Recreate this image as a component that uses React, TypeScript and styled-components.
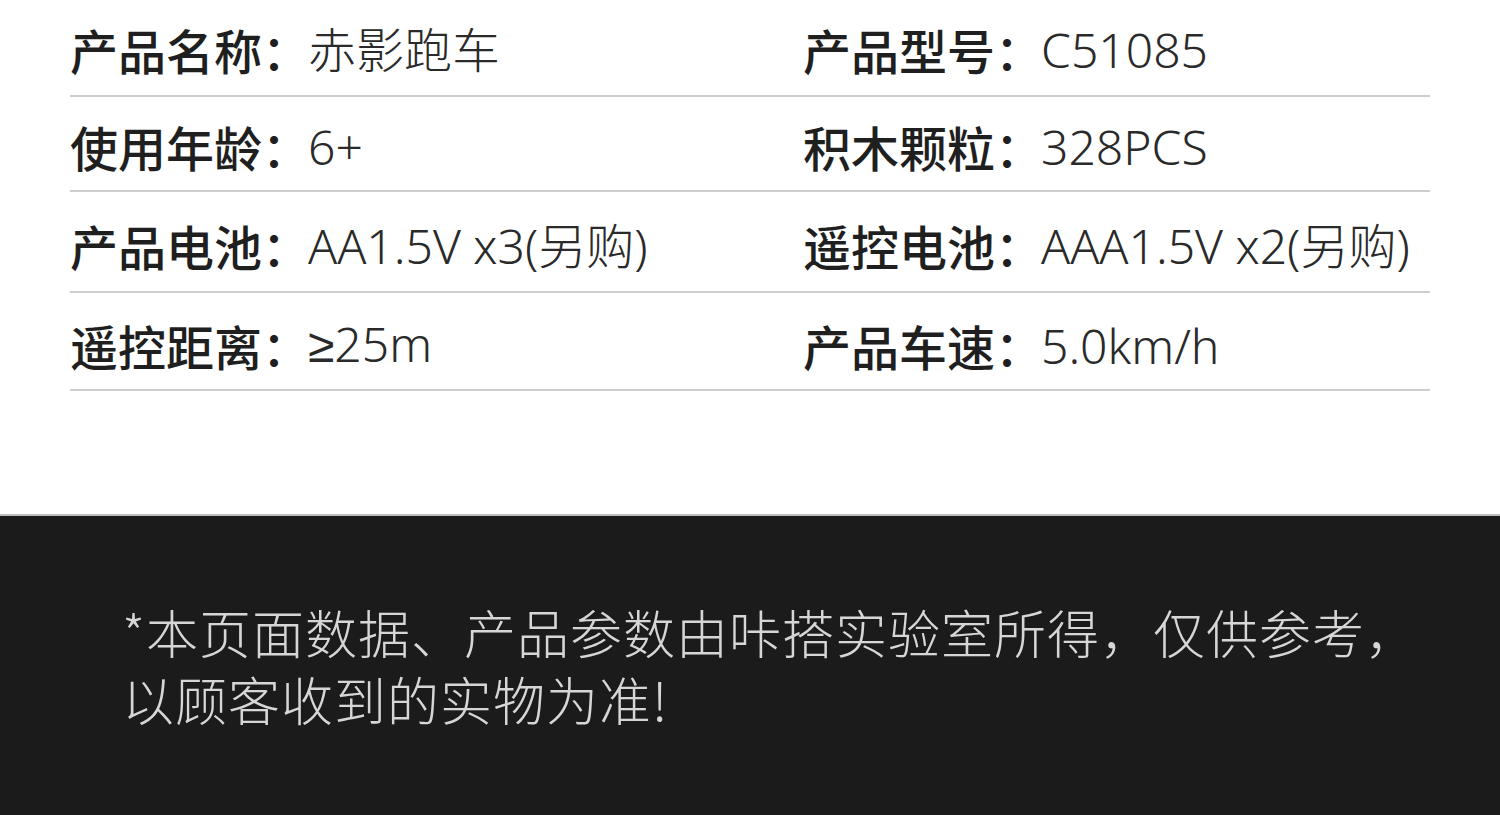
import React from "react";
import styled, { createGlobalStyle } from "styled-components";

const GlobalStyle = createGlobalStyle`
  html, body {
    margin: 0;
    padding: 0;
    background: #ffffff;
  }
  body {
    font-family: "Noto Sans CJK SC", "Noto Sans", sans-serif;
  }
`;

const Page = styled.div`
  width: 1500px;
  height: 815px;
  overflow: hidden;
  display: flex;
  flex-direction: column;
`;

const SpecSection = styled.section`
  background: #ffffff;
  height: 514px;
  padding: 0 70px;
  box-sizing: border-box;
`;

const SpecGrid = styled.div`
  display: grid;
  grid-template-columns: 733px 1fr;
`;

const Row = styled.div<{ $h: number; $pb: number }>`
  height: ${(p) => p.$h}px;
  display: flex;
  align-items: flex-end;
  padding-bottom: ${(p) => p.$pb}px;
  box-sizing: border-box;
  border-bottom: 2px solid #cdcdcd;
  white-space: nowrap;
`;

const Label = styled.span`
  font-size: 48px;
  font-weight: 500;
  color: #1f1f1f;
  line-height: 1.2;
  width: 238px;
  flex: none;
`;

const Value = styled.span`
  font-family: "Noto Sans", "Noto Sans CJK SC", sans-serif;
  font-size: 48px;
  font-weight: 300;
  color: #2a2a2a;
  line-height: 1.2;
`;

const Sym = styled.span`
  font-family: "Liberation Sans", "DejaVu Sans", sans-serif;
  font-weight: 400;
`;

const NoteSection = styled.section`
  flex: 1;
  background: #1b1b1b;
  border-top: 2px solid #bdbdbd;
  padding: 82px 0 0 122px;
`;

const Note = styled.p`
  margin: 0;
  font-size: 52px;
  font-weight: 300;
  line-height: 67px;
  letter-spacing: 1px;
  color: #d6d6d6;
  width: 1320px;
`;

type Spec = [React.ReactNode, React.ReactNode];

const rows: { left: Spec; right: Spec; h: number; pb: number }[] = [
  { left: ["产品名称：", "赤影跑车"], right: ["产品型号：", "C51085"], h: 97, pb: 16 },
  { left: ["使用年龄：", "6+"], right: ["积木颗粒：", "328PCS"], h: 95, pb: 14 },
  {
    left: ["产品电池：", "AA1.5V x3(另购)"],
    right: ["遥控电池：", "AAA1.5V x2(另购)"],
    h: 101,
    pb: 16,
  },
  {
    left: ["遥控距离：", <><Sym>≥</Sym>25m</>],
    right: ["产品车速：", "5.0km/h"],
    h: 98,
    pb: 14,
  },
];

export default function App() {
  return (
    <Page>
      <GlobalStyle />
      <SpecSection>
        <SpecGrid>
          {rows.map((r, i) => (
            <React.Fragment key={i}>
              <Row $h={r.h} $pb={r.pb}>
                <Label>{r.left[0]}</Label>
                <Value>{r.left[1]}</Value>
              </Row>
              <Row $h={r.h} $pb={r.pb}>
                <Label>{r.right[0]}</Label>
                <Value>{r.right[1]}</Value>
              </Row>
            </React.Fragment>
          ))}
        </SpecGrid>
      </SpecSection>
      <NoteSection>
        <Note>
          *本页面数据、产品参数由咔搭实验室所得，仅供参考，
          <br />
          以顾客收到的实物为准!
        </Note>
      </NoteSection>
    </Page>
  );
}
